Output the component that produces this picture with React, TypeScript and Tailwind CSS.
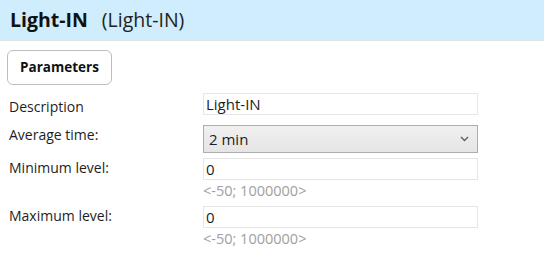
import React from "react";

function Field({ label, children, hint, labelPad = 0 }: { label: string; children: React.ReactNode; hint?: string; labelPad?: number }) {
  return (
    <div className="flex">
      <div className="w-[203px] pl-[9px] text-[14px] leading-[20px] text-[#1e1e1e]" style={{ paddingTop: labelPad }}>{label}</div>
      <div className="flex flex-col">
        {children}
        {hint && <div className="text-[14.5px] leading-[18px] text-[#a0a0a0] mt-[2px]">{hint}</div>}
      </div>
    </div>
  );
}

function TextBox({ value }: { value: string }) {
  return (
    <div className="w-[275px] h-[22px] border border-[#e6e6e6] bg-white px-[2px] text-[15px] leading-[20px] text-[#1e1e1e]">
      {value}
    </div>
  );
}

export default function App() {
  return (
    <div className="w-[544px] h-[269px] bg-white" style={{ fontFamily: '"Open Sans", "Noto Sans", sans-serif' }}>
      <div className="h-[41px] bg-[#cfedfd] border-b border-[#dfe6ea] flex items-center pl-[10px] gap-[14px]">
        <span className="text-[19.5px] font-bold text-[#111]">Light-IN</span>
        <span className="text-[19.5px] text-[#222]">(Light-IN)</span>
      </div>
      <div className="pt-[9px] pl-[7px]">
        <div className="w-[105px] h-[35px] rounded-[6px] border border-[#bdbdbd] flex items-center justify-center text-[13.5px] font-bold text-[#111]">
          Parameters
        </div>
      </div>
      <div className="mt-[8px] flex flex-col">
        <Field label="Description" labelPad={4}>
          <TextBox value="Light-IN" />
        </Field>
        <div className="mt-[8px]">
          <Field label="Average time:" labelPad={0}>
            <div className="w-[275px] h-[28px] border border-[#adadad] bg-gradient-to-b from-[#f0f0f0] to-[#e5e5e5] px-[5px] flex items-center justify-between text-[15px] text-[#1e1e1e]">
              <span>2 min</span>
              <svg width="9" height="6" viewBox="0 0 9 6" className="mr-[3px]">
                <path d="M1 1 L4.5 4.5 L8 1" fill="none" stroke="#606060" strokeWidth="1.4" />
              </svg>
            </div>
          </Field>
        </div>
        <div className="mt-[5px]">
          <Field label="Minimum level:" hint="<-50; 1000000>" labelPad={0}>
            <TextBox value="0" />
          </Field>
        </div>
        <div className="mt-[6px]">
          <Field label="Maximum level:" hint="<-50; 1000000>" labelPad={0}>
            <TextBox value="0" />
          </Field>
        </div>
      </div>
    </div>
  );
}
